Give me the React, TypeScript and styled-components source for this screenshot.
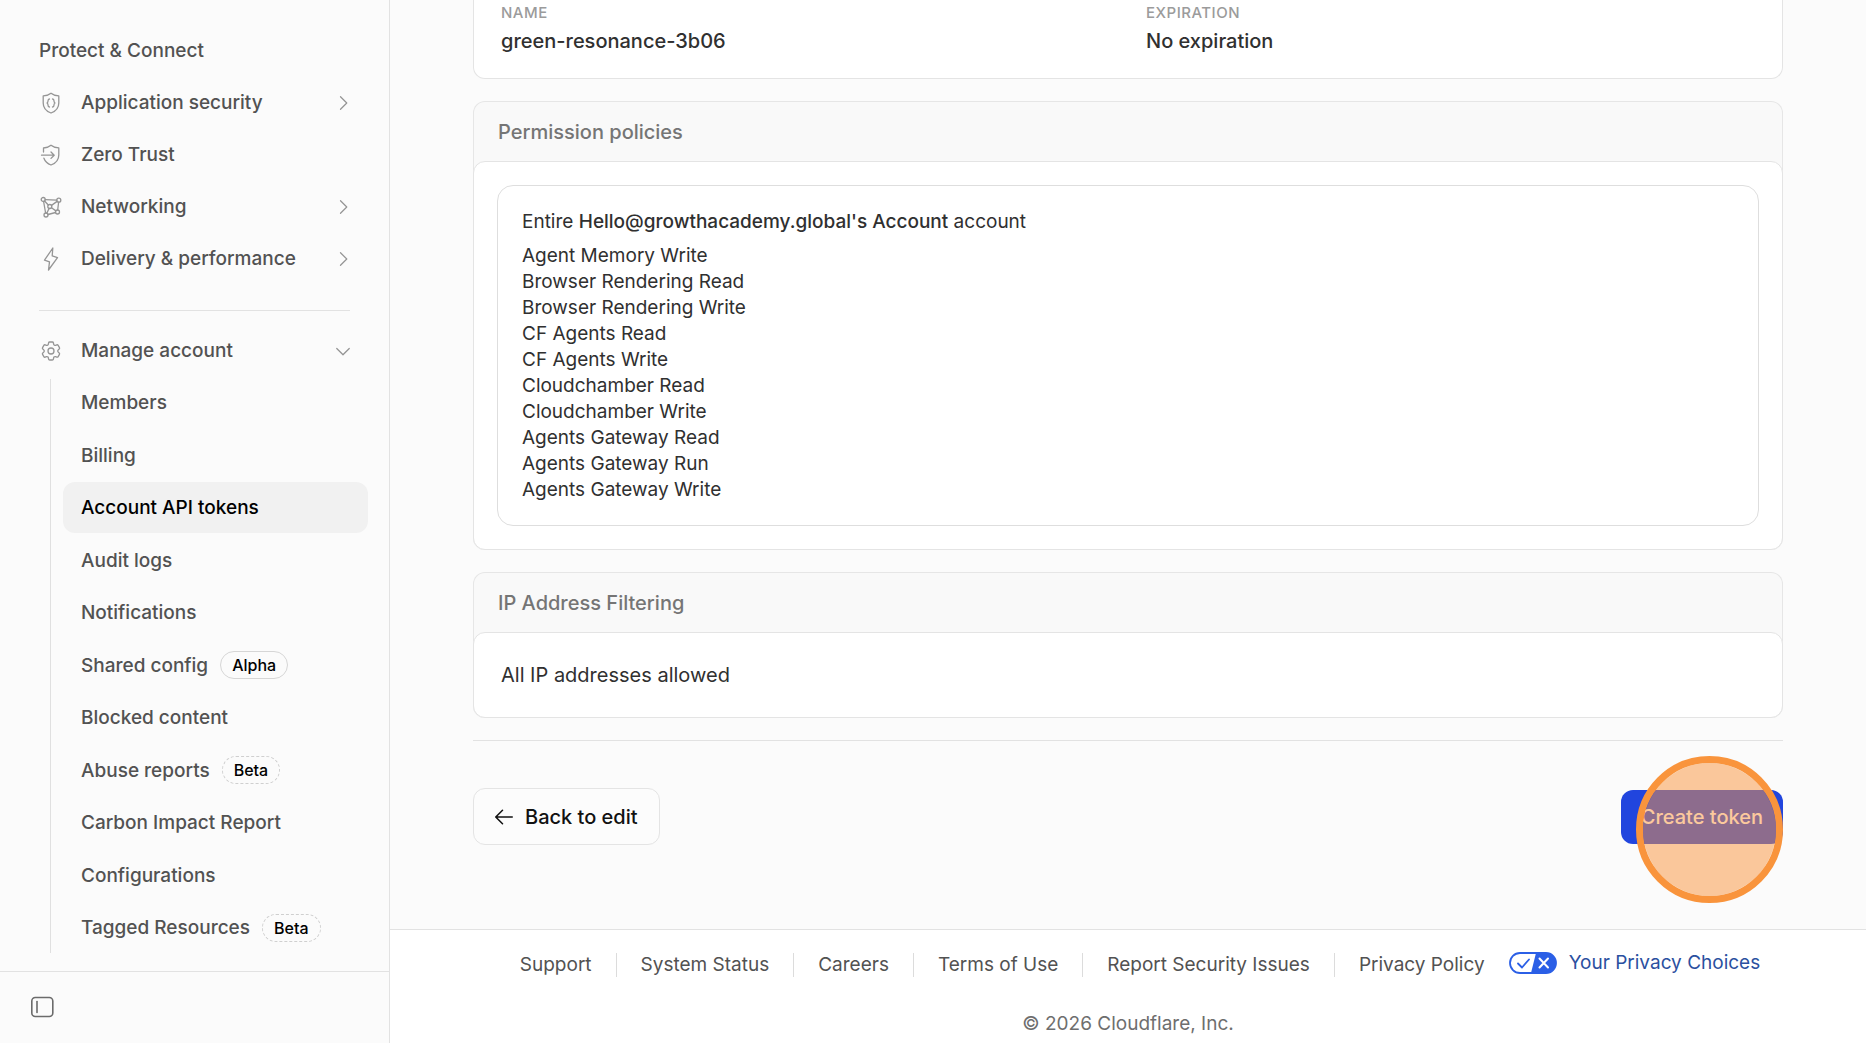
import React from "react";
import styled, { createGlobalStyle } from "styled-components";
import { HiOutlineCog6Tooth } from "react-icons/hi2";
import { PiArrowLeft, PiCaretDown, PiCaretRight } from "react-icons/pi";

const GlobalStyle = createGlobalStyle`
  *, *::before, *::after { box-sizing: border-box; }
  body {
    margin: 0;
    background: #fbfbfb;
    color: #303030;
    font-family: Inter, "Liberation Sans", sans-serif;
    font-size: 19px;
  }
  h2, p, ul, dl, dd { margin: 0; padding: 0; }
  ul { list-style: none; }
  a { color: inherit; text-decoration: none; }
  button { font: inherit; cursor: pointer; }
`;

const Shell = styled.div`
  display: grid;
  grid-template-columns: 390px minmax(0, 1fr);
  height: 100vh;
  overflow: hidden;
`;

const Sidebar = styled.aside`
  display: flex;
  flex-direction: column;
  min-height: 0;
  border-right: 1px solid #e2e2e2;
`;

const Nav = styled.nav`
  flex: 1;
  display: flex;
  flex-direction: column;
  min-height: 0;
  padding: 37px 21px 18px;
  font-weight: 500;
  color: #525252;
`;

const GroupTitle = styled.h2`
  padding: 0 18px;
  margin-bottom: 12px;
  font-size: 19px;
  line-height: 28px;
  font-weight: 500;
`;

const NavList = styled.ul`
  display: grid;
  gap: 1px;
`;

const NavButton = styled.button`
  width: 100%;
  height: 51px;
  display: flex;
  align-items: center;
  gap: 18px;
  padding: 0 15px 0 18px;
  border: 0;
  border-radius: 12px;
  background: none;
  color: #525252;
  text-align: left;
  font-weight: 500;

  svg { flex: none; color: #959595; }
`;

const NavLabel = styled.span`
  flex: 1;
`;

const Separator = styled.hr`
  width: auto;
  height: 1px;
  margin: 26px 18px 14px;
  border: 0;
  background: #e2e2e2;
`;

const SubList = styled.ul`
  flex: 1;
  display: flex;
  flex-direction: column;
  justify-content: space-between;
  margin-left: 29px;
  padding: 1px 0 0 13px;
  background: linear-gradient(#e0e0e0, #e0e0e0) left bottom / 1px calc(100% - 3px) no-repeat;
`;

const SubLink = styled.a<{ $active?: boolean }>`
  height: 51px;
  display: flex;
  align-items: center;
  gap: 12px;
  padding: 0 18px;
  border-radius: 12px;
  color: ${(p) => (p.$active ? "#000" : "#525252")};
  background: ${(p) => (p.$active ? "#f1f1f1" : "transparent")};
`;

const Badge = styled.span<{ $dashed?: boolean }>`
  padding: 0 11px;
  border: 1px ${(p) => (p.$dashed ? "dashed #cfcfcf" : "solid #d6d6d6")};
  border-radius: 14px;
  color: #000;
  font-size: 16px;
  line-height: 26px;
`;

const SidebarFooter = styled.div`
  height: 72px;
  display: flex;
  align-items: center;
  padding: 0 30px 2px;
  border-top: 1px solid #e2e2e2;
`;

const IconButton = styled.button`
  display: flex;
  padding: 0;
  border: 0;
  background: none;
  color: #6b6b6b;
`;

const Main = styled.div`
  display: flex;
  flex-direction: column;
  min-width: 0;
`;

const Content = styled.main`
  flex: 1;
  display: flex;
  flex-direction: column;
  gap: 22px;
  padding: 0 83px;
`;

const SummaryCard = styled.dl`
  display: grid;
  grid-template-columns: 1fr 1fr;
  column-gap: 36px;
  padding: 3px 27px 23px;
  border: 1px solid #e4e4e4;
  border-top: 0;
  border-radius: 0 0 12px 12px;
  background: #fff;
`;

const Term = styled.dt`
  color: #9b9b9b;
  font-size: 15px;
  line-height: 20px;
  font-weight: 500;
  letter-spacing: 0.5px;
`;

const Detail = styled.dd`
  padding-top: 4px;
  font-size: 20px;
  line-height: 28px;
  font-weight: 500;
`;

const Card = styled.section`
  border-radius: 12px;
  background: #f9f9f9;
  box-shadow: inset 0 0 0 1px #e6e6e6;
`;

const CardTitle = styled.h2`
  padding: 2px 25px 0;
  color: #757575;
  font-size: 20px;
  line-height: 58px;
  font-weight: 500;
`;

const CardBody = styled.div`
  padding: 23px;
  border: 1px solid #e4e4e4;
  border-radius: 12px;
  background: #fff;
`;

const PolicyBox = styled.div`
  padding: 23px 24px 22px;
  border: 1px solid #dedede;
  border-radius: 16px;
  line-height: 26px;
`;

const PolicyScope = styled.p`
  margin-bottom: 8px;

  strong { font-weight: 500; }
`;

const Note = styled.p`
  padding: 4px;
  font-size: 20px;
  line-height: 30px;
`;

const Actions = styled.div`
  display: flex;
  align-items: center;
  justify-content: space-between;
  padding-top: 47px;
  border-top: 1px solid #e2e2e2;
`;

const BackButton = styled.button`
  height: 57px;
  display: flex;
  align-items: center;
  gap: 9px;
  padding: 0 21px 0 18px;
  border: 1px solid #e4e4e4;
  border-radius: 12px;
  background: #fcfcfc;
  color: #111;
  font-size: 20px;
  font-weight: 500;
`;

const CreateWrap = styled.div`
  position: relative;
  display: flex;
`;

const CreateButton = styled.button`
  height: 54px;
  padding: 0 20px;
  border: 0;
  border-radius: 12px;
  background: #2145de;
  color: #fff;
  font-size: 20px;
  font-weight: 500;
`;

const ClickMarker = styled.span`
  position: absolute;
  right: 0;
  top: -34px;
  width: 147px;
  height: 147px;
  border: 7px solid #f9943c;
  border-radius: 50%;
  background: rgba(249, 148, 60, 0.5);
  background-clip: padding-box;
  pointer-events: none;
`;

const Footer = styled.footer`
  display: grid;
  align-content: start;
  justify-items: center;
  gap: 32px;
  height: 114px;
  padding-top: 21px;
  border-top: 1px solid #e2e2e2;
  background: #fff;
  color: #525252;
  line-height: 28px;
`;

const FooterLinks = styled.ul`
  display: flex;
  align-items: center;
`;

const FooterItem = styled.li`
  padding: 0 24px;
  line-height: 24px;

  & + & { border-left: 1px solid #dcdcdc; }
`;

const PrivacyChoices = styled.a`
  display: flex;
  align-items: center;
  gap: 12px;
  line-height: 24px;
  padding-bottom: 3px;
  color: #2b50a0;
`;

const Copyright = styled.p`
  color: #6e6e6e;
`;

type IconProps = { children: React.ReactNode };

const LineIcon = ({ children }: IconProps) => (
  <svg width="24" height="24" viewBox="0 0 24 24" fill="none" stroke="currentColor"
    strokeWidth="1.3" strokeLinecap="round" strokeLinejoin="round" aria-hidden="true">
    {children}
  </svg>
);

const ShieldCode = () => (
  <LineIcon>
    <path d="M12 2.200C9.800 4 7.200 4.800 4.200 4.900v7c0 4.600 3 8.200 7.800 10.100 4.800-1.900 7.800-5.500 7.800-10.100v-7C16.800 4.800 14.200 4 12 2.200Z" />
    <path d="M10.500 8c-1.500 0-1.500 1-1.500 2s0 1.500-1 2c1 .5 1 1 1 2s0 2 1.500 2M13.500 8c1.500 0 1.500 1 1.500 2s0 1.500 1 2c-1 .5-1 1-1 2s0 2-1.500 2" />
  </LineIcon>
);

const ShieldArrow = () => (
  <LineIcon>
    <path d="M4.500 9V5C7.300 4.800 9.900 4 12 2.200 14.200 4 16.800 4.800 19.800 4.900v7c0 4.600-3 8.200-7.800 10.100-3.600-1.400-6-3.800-7.100-6.800" />
    <path d="M2.500 12.200h12.500M12 9l3.200 3.200L12 15.400" />
  </LineIcon>
);

const Network = () => (
  <LineIcon>
    <circle cx="4.200" cy="4.500" r="2" />
    <circle cx="19.800" cy="5.200" r="2" />
    <circle cx="7" cy="20" r="2" />
    <circle cx="18.500" cy="17" r="2" />
    <circle cx="10.800" cy="11.500" r="2" />
    <path d="M6.200 4.600l11.600.5M4.600 6.500l2 11.500M19.600 7.200l-.9 7.800M9 19.500l7.600-2M5.600 6l3.700 4M12.500 10.400l5.600-4M10.100 13.400l-2.300 4.800M12.500 12.700l4.400 3.200" />
  </LineIcon>
);

const Bolt = () => (
  <LineIcon>
    <path d="M13.800 1 5.500 13.200l5 1.600L9.500 23l9-12.400-5.300-1.700Z" />
  </LineIcon>
);

const Gear = styled(HiOutlineCog6Tooth)`
  path { stroke-width: 1.3px; }
`;

const PanelIcon = () => (
  <svg width="24" height="24" viewBox="0 0 24 24" fill="none" stroke="currentColor"
    strokeWidth="1.6" strokeLinecap="round" aria-hidden="true">
    <rect x="1.800" y="2.500" width="21" height="19" rx="3.500" />
    <path d="M7 6.500v11" />
  </svg>
);

const PrivacyToggle = () => (
  <svg width="48" height="22" viewBox="0 0 48 22" fill="none" strokeLinecap="round" strokeLinejoin="round" aria-hidden="true">
    <rect x="1" y="1" width="46" height="20" rx="10" fill="#fff" />
    <path d="M27 1h10a10 10 0 0 1 0 20H22Z" fill="#2b5fe6" />
    <rect x="1" y="1" width="46" height="20" rx="10" stroke="#2b5fe6" strokeWidth="1.8" />
    <path d="M9 11.500l4 4 7-8" stroke="#2b5fe6" strokeWidth="1.8" />
    <path d="M30.500 6.500l8.500 9M39 6.500l-8.500 9" stroke="#fff" strokeWidth="2" />
  </svg>
);

const protectItems = [
  { label: "Application security", icon: <ShieldCode />, expandable: true },
  { label: "Zero Trust", icon: <ShieldArrow />, expandable: false },
  { label: "Networking", icon: <Network />, expandable: true },
  { label: "Delivery & performance", icon: <Bolt />, expandable: true },
];

const accountItems: { label: string; badge?: string; active?: boolean }[] = [
  { label: "Members" },
  { label: "Billing" },
  { label: "Account API tokens", active: true },
  { label: "Audit logs" },
  { label: "Notifications" },
  { label: "Shared config", badge: "Alpha" },
  { label: "Blocked content" },
  { label: "Abuse reports", badge: "Beta" },
  { label: "Carbon Impact Report" },
  { label: "Configurations" },
  { label: "Tagged Resources", badge: "Beta" },
];

const permissions = [
  "Agent Memory Write",
  "Browser Rendering Read",
  "Browser Rendering Write",
  "CF Agents Read",
  "CF Agents Write",
  "Cloudchamber Read",
  "Cloudchamber Write",
  "Agents Gateway Read",
  "Agents Gateway Run",
  "Agents Gateway Write",
];

const footerLinks = [
  "Support",
  "System Status",
  "Careers",
  "Terms of Use",
  "Report Security Issues",
  "Privacy Policy",
];

export default function App() {
  return (
    <>
      <GlobalStyle />
      <Shell>
        <Sidebar>
          <Nav>
            <GroupTitle>Protect &amp; Connect</GroupTitle>
            <NavList>
              {protectItems.map((item) => (
                <li key={item.label}>
                  <NavButton type="button">
                    {item.icon}
                    <NavLabel>{item.label}</NavLabel>
                    {item.expandable && <PiCaretRight size={20} />}
                  </NavButton>
                </li>
              ))}
            </NavList>
            <Separator />
            <NavButton type="button" aria-expanded="true">
              <Gear size={24} />
              <NavLabel>Manage account</NavLabel>
              <PiCaretDown size={20} />
            </NavButton>
            <SubList>
              {accountItems.map((item) => (
                <li key={item.label}>
                  <SubLink href="#" $active={item.active}>
                    {item.label}
                    {item.badge && <Badge $dashed={item.badge === "Beta"}>{item.badge}</Badge>}
                  </SubLink>
                </li>
              ))}
            </SubList>
          </Nav>
          <SidebarFooter>
            <IconButton type="button" aria-label="Collapse sidebar">
              <PanelIcon />
            </IconButton>
          </SidebarFooter>
        </Sidebar>
        <Main>
          <Content>
            <SummaryCard>
              <div>
                <Term>NAME</Term>
                <Detail>green-resonance-3b06</Detail>
              </div>
              <div>
                <Term>EXPIRATION</Term>
                <Detail>No expiration</Detail>
              </div>
            </SummaryCard>
            <Card>
              <CardTitle>Permission policies</CardTitle>
              <CardBody>
                <PolicyBox>
                  <PolicyScope>
                    Entire <strong>Hello@growthacademy.global's Account</strong> account
                  </PolicyScope>
                  <ul>
                    {permissions.map((name) => (
                      <li key={name}>{name}</li>
                    ))}
                  </ul>
                </PolicyBox>
              </CardBody>
            </Card>
            <Card>
              <CardTitle>IP Address Filtering</CardTitle>
              <CardBody>
                <Note>All IP addresses allowed</Note>
              </CardBody>
            </Card>
            <Actions>
              <BackButton type="button">
                <PiArrowLeft size={24} />
                Back to edit
              </BackButton>
              <CreateWrap>
                <CreateButton type="button">Create token</CreateButton>
                <ClickMarker />
              </CreateWrap>
            </Actions>
          </Content>
          <Footer>
            <FooterLinks>
              {footerLinks.map((label) => (
                <FooterItem key={label}>
                  <a href="#">{label}</a>
                </FooterItem>
              ))}
              <li>
                <PrivacyChoices href="#">
                  <PrivacyToggle />
                  Your Privacy Choices
                </PrivacyChoices>
              </li>
            </FooterLinks>
            <Copyright>© 2026 Cloudflare, Inc.</Copyright>
          </Footer>
        </Main>
      </Shell>
    </>
  );
}
